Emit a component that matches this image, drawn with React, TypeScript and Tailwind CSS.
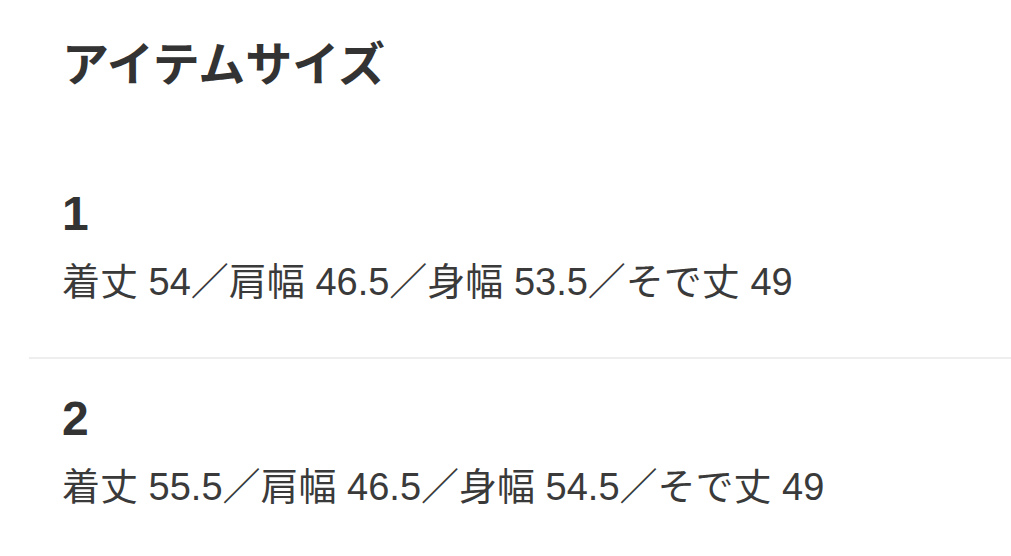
import React from "react";

const sizes = [
  { name: "1", detail: "着丈 54／肩幅 46.5／身幅 53.5／そで丈 49" },
  { name: "2", detail: "着丈 55.5／肩幅 46.5／身幅 54.5／そで丈 49" },
];

export default function App() {
  return (
    <div
      className="w-[1011px] h-[556px] bg-white text-[#333333] overflow-hidden"
      style={{ fontFamily: '"Liberation Sans", "Noto Sans CJK JP", sans-serif' }}
    >
      {/* heading */}
      <h2 className="pl-[62px] pt-[41px] text-[47px] leading-[47px] font-bold">
        アイテムサイズ
      </h2>

      <ul className="mt-[102px] ml-[29px]">
        {sizes.map((s, i) => (
          <li
            key={s.name}
            className={`pl-[33px] ${
              i === 0 ? "pb-[51px] border-b-2 border-[#eeeeee]" : "pt-[36px]"
            }`}
          >
            <p className="text-[48px] leading-[48px] font-bold">{s.name}</p>
            <p className="mt-[20px] text-[38px] leading-[48px] text-[#3a3a3a]">
              {s.detail}
            </p>
          </li>
        ))}
      </ul>
    </div>
  );
}
